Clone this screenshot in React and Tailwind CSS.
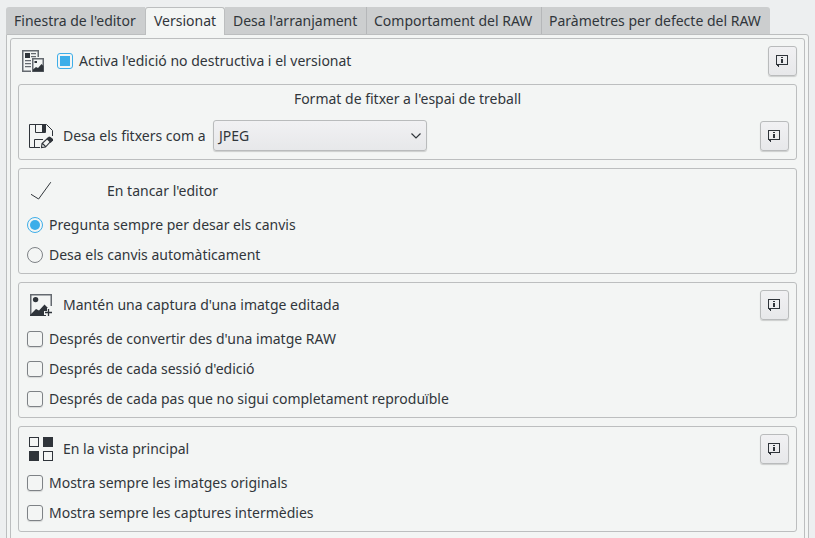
import React from "react";

function InfoButton() {
  return (
    <button className="flex h-[30px] w-[29px] shrink-0 items-center justify-center rounded-[3px] border border-[#b9bbbc] bg-linear-to-b from-[#f1f1f3] to-[#e7e8ea] shadow-[0_1px_1px_rgba(0,0,0,0.16)]">
      <svg className="-ml-px" width="14" height="14" viewBox="0 0 14 14" shapeRendering="crispEdges" fill="#2f343a">
        <path fillRule="evenodd" d="M1 1h12v10H4v2H3v-1H2v-1H1zM2 2v8h10V2z" />
        <path d="M6 3h2v1H6zM6 5h2v4H6z" />
      </svg>
    </button>
  );
}

function Group({ className, children }) {
  return (
    <section className={"flex w-[779px] shrink-0 flex-col rounded-[3px] border border-[#bcbebf] " + className}>
      {children}
    </section>
  );
}

function Check({ label }) {
  return (
    <label className="flex h-[30px] items-center pl-2">
      <span className="h-4 w-4 rounded-[3px] border border-[#7e8286] shadow-[0_1px_1px_rgba(0,0,0,0.12)]" />
      <span className="-mt-px ml-1.5">{label}</span>
    </label>
  );
}

function Radio({ label, checked }) {
  return (
    <label className="flex h-[30px] items-center pl-2">
      <span
        className={
          "flex h-4 w-4 items-center justify-center rounded-full border " +
          (checked ? "border-[#3daee9]" : "border-[#7e8286]")
        }
      >
        {checked && <span className="h-2.5 w-2.5 rounded-full bg-[#3daee9]" />}
      </span>
      <span className="-mt-px ml-1.5">{label}</span>
    </label>
  );
}

function VersionIcon() {
  return (
    <svg className="shrink-0" width="24" height="24" viewBox="0 0 24 24">
      <g fill="#656a70">
        <path d="M1 1h17v7h-1.500V2.500H2.500V21.500H10V23H1z" />
        <path d="M10 4h5v1.300h-5zM10 7h5v1.300h-5zM4 11h6v1.300H4zM4 14h6v1.300H4zM4 17h6v1.300H4z" />
        <path fillRule="evenodd" d="M11 9h12v14H11zM12.500 10.500v11h9v-11z" />
      </g>
      <path fill="#2f343a" d="M4 4h5v5H4zM13.500 12h2.500v2h-2.500zM12 22.500v-2l3-2.500 2 1 3.500-4 2 2v5.500z" />
    </svg>
  );
}

function SaveAsIcon() {
  return (
    <svg className="shrink-0" width="26" height="26" viewBox="0 0 26 26" fill="none" stroke="#2f343a">
      <path d="M12 24.500H1.500V1.500H18.500L24.500 7.500V13M7.500 1.500V9.500H17.500V1.500M6.500 24V16.500H15" />
      <path d="M14 2h4v7h-4z" fill="#2f343a" stroke="none" />
      <path d="M13.500 24.500l.5-4 6-5.500 3 3-5.500 6zM14.500 20.500l3 3" strokeWidth="1.100" />
      <path d="M18.500 16l2.500-2.500 1.500.5 2.500 2v1.500l-2.500 2.500z" fill="#2f343a" stroke="none" />
    </svg>
  );
}

function ImageIcon() {
  return (
    <svg className="shrink-0" width="24" height="24" viewBox="0 0 24 24">
      <path d="M22.250 13V1.750H1.750V23" fill="none" stroke="#656a70" strokeWidth="1.500" />
      <circle cx="6.600" cy="6.600" r="2.700" fill="#2f343a" />
      <path d="M1 23v-1l6-6 3 1.500 5.500-6 3.500 3.500h-1v3h-3v4h2v1z" fill="#2f343a" />
      <path d="M19.500 16v7M16 19.500h7" stroke="#2f343a" strokeWidth="1.300" />
    </svg>
  );
}

function GridIcon() {
  return (
    <svg className="shrink-0" width="26" height="26" viewBox="0 0 26 26" fill="none" stroke="#2f343a">
      <rect x="1.500" y="1.500" width="9" height="9" />
      <rect x="15.500" y="15.500" width="9" height="9" />
      <path d="M15 1h10v10H15zM1 15h10v10H1z" fill="#2f343a" stroke="none" />
    </svg>
  );
}

export default function App() {
  return (
    <div className="h-[538px] w-[815px] overflow-hidden bg-[#edeff0] pt-[7px] pl-1.5 font-['Noto_Sans',sans-serif] text-[14px] leading-[18px] whitespace-nowrap text-[#31363b]">
      <nav className="relative z-10 flex h-7 items-start">
        <div className="h-[27px] w-[139px] rounded-tl-[3px] bg-[#cccecf] pt-[5px] pl-2">Finestra de l'editor</div>
        <div className="h-7 w-20 rounded-t-[3px] border-x border-t border-[#bcbebf] bg-[#f3f5f4] pt-1 pl-2">Versionat</div>
        <div className="h-[27px] w-[142px] border-r border-[#b5b7b9] bg-[#cccecf] pt-[5px] pl-2">Desa l'arranjament</div>
        <div className="h-[27px] w-[175px] border-r border-[#b5b7b9] bg-[#cccecf] pt-[5px] pl-[7px]">Comportament del RAW</div>
        <div className="h-[27px] w-[228px] rounded-tr-[3px] bg-[#cccecf] pt-[5px] pl-[7px]">Paràmetres per defecte del RAW</div>
      </nav>
      <main className="-mt-px h-[520px] w-[803px] rounded-tr-[3px] border border-[#bcbebf] bg-[#f3f5f4] p-[3px]">
        <div className="flex h-[510px] w-[795px] flex-col rounded-t-[3px] border border-[#bcbebf] pt-[7px] pl-[7px]">
          <header className="flex h-[30px] w-[779px] items-center pl-[3px]">
            <VersionIcon />
            <span className="ml-3 flex h-4 w-4 items-center justify-center rounded-[3px] border border-[#3daee9]">
              <span className="h-2.5 w-2.5 bg-[#3daee9]" />
            </span>
            <span className="mr-auto ml-1.5">Activa l'edició no destructiva i el versionat</span>
            <InfoButton />
          </header>

          <Group className="mt-2 h-[76px]">
            <h2 className="mt-[5px] text-center">Format de fitxer a l'espai de treball</h2>
            <div className="mt-3 flex h-8 items-center pr-[7px] pl-[9px]">
              <SaveAsIcon />
              <span className="ml-[9px] w-[150px]">Desa els fitxers com a</span>
              <button className="-mt-px flex h-[31px] w-[214px] shrink-0 items-center justify-between rounded-[3px] border border-[#b9bbbc] bg-linear-to-b from-[#f1f1f3] to-[#e7e8ea] pr-[5px] pl-[5px] shadow-[0_1px_1px_rgba(0,0,0,0.16)]">
                JPEG
                <svg width="10" height="6" viewBox="0 0 10 6" fill="none" stroke="#31363b" strokeWidth="1.200">
                  <path d="M.5.5L5 5 9.500.5" />
                </svg>
              </button>
              <span className="grow" />
              <InfoButton />
            </div>
          </Group>

          <Group className="mt-2 h-[106px]">
            <div className="mt-[7px] flex h-[30px] items-center pl-[9px]">
              <svg width="26" height="26" viewBox="0 0 26 26" fill="none" stroke="#31363b">
                <path d="M3 16.300L10.600 21 22.800 4.200" />
              </svg>
              <span className="-mt-px ml-[53px]">En tancar l'editor</span>
            </div>
            <div className="mt-[4px]">
              <Radio label="Pregunta sempre per desar els canvis" checked />
              <Radio label="Desa els canvis automàticament" />
            </div>
          </Group>

          <Group className="mt-2 h-[136px]">
            <div className="mt-[7px] flex h-[30px] items-center justify-between pr-[7px] pl-[10px]">
              <div className="flex items-center gap-[10px]">
                <ImageIcon />
                Mantén una captura d'una imatge editada
              </div>
              <InfoButton />
            </div>
            <div className="mt-[4px]">
              <Check label="Després de convertir des d'una imatge RAW" />
              <Check label="Després de cada sessió d'edició" />
              <Check label="Després de cada pas que no sigui completament reproduïble" />
            </div>
          </Group>

          <Group className="mt-2 h-[106px]">
            <div className="mt-[7px] flex h-[30px] items-center justify-between pr-[7px] pl-[9px]">
              <div className="flex items-center gap-[9px]">
                <GridIcon />
                En la vista principal
              </div>
              <InfoButton />
            </div>
            <div className="mt-[4px]">
              <Check label="Mostra sempre les imatges originals" />
              <Check label="Mostra sempre les captures intermèdies" />
            </div>
          </Group>
        </div>
      </main>
    </div>
  );
}
